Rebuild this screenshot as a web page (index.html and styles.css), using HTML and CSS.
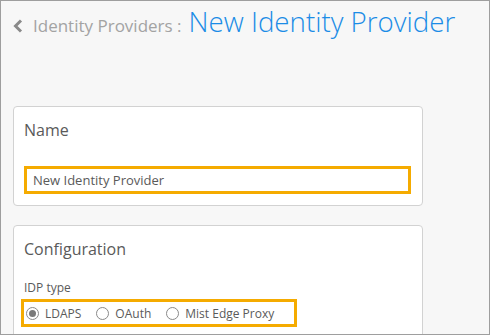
FILE: index.html
```html
<!DOCTYPE html>
<html>
<head>
<meta charset="utf-8">
<link rel="stylesheet" href="styles.css">
</head>
<body>
<div class="frame">
  <div class="header">
    <svg class="back" width="10" height="14" viewBox="0 0 10 14"><polyline points="8,1.5 2.5,7 8,12.5" fill="none" stroke="#8a8a8a" stroke-width="3"/></svg>
    <span class="crumb">Identity Providers :</span>
    <span class="title">New Identity Provider</span>
  </div>
  <div class="card">
    <div class="card-title">Name</div>
    <div class="input name-input">New Identity Provider</div>
  </div>
  <div class="card card-config">
    <div class="card-title">Configuration</div>
    <div class="field-label">IDP type</div>
    <div class="radio-group">
      <label class="radio"><span class="dot checked"></span>LDAPS</label>
      <label class="radio"><span class="dot"></span>OAuth</label>
      <label class="radio"><span class="dot"></span>Mist Edge Proxy</label>
    </div>
  </div>
</div>
</body>
</html>
```
FILE: styles.css
```css
html, body {
  margin: 0;
  padding: 0;
}
body {
  font-family: "Open Sans", "Liberation Sans", sans-serif;
  color: #555;
}
.frame {
  width: 490px;
  height: 335px;
  box-sizing: border-box;
  border: 1px solid #9e9e9e;
  background: #f7f7f7;
  overflow: hidden;
  padding-left: 12px;
}
.header {
  height: 105px;
  box-sizing: border-box;
  padding-top: 2px;
  display: flex;
  align-items: baseline;
  white-space: nowrap;
}
.back {
  align-self: flex-start;
  margin-top: 16px;
  margin-right: 10px;
}
.crumb {
  font-size: 17px;
  color: #a3a3a3;
  font-weight: 400;
  margin-right: 7px;
}
.title {
  font-size: 27.7px;
  line-height: 36px;
  font-weight: 300;
  color: #1b8ce6;
}
.card {
  width: 410px;
  box-sizing: border-box;
  background: #fff;
  border: 1px solid #d2d2d2;
  border-radius: 4px;
  padding: 12px 11px 11px 10px;
}
.card-config {
  margin-top: 19px;
  height: 200px;
}
.card-title {
  font-size: 16px;
  line-height: 22px;
  color: #5a5a5a;
}
.input {
  margin-top: 25px;
  height: 28px;
  box-sizing: border-box;
  border: 3px solid #f5ab00;
  padding-left: 6px;
  font-size: 13px;
  line-height: 22px;
  color: #5a5a5a;
}
.field-label {
  margin-top: 20px;
  font-size: 12px;
  line-height: 16px;
  color: #5a5a5a;
}
.radio-group {
  margin-top: 3px;
  margin-left: -3px;
  width: 276px;
  height: 28px;
  box-sizing: border-box;
  border: 3px solid #f5ab00;
  padding-left: 2px;
  display: flex;
  align-items: center;
  font-size: 12px;
  color: #5a5a5a;
  white-space: nowrap;
}
.radio {
  display: flex;
  align-items: center;
  flex-shrink: 0;
  margin-right: 15px;
}
.radio:last-child {
  margin-right: 0;
}
.dot {
  width: 13px;
  height: 13px;
  flex-shrink: 0;
  box-sizing: border-box;
  border: 1px solid #8a8a8a;
  border-radius: 50%;
  background: #fff;
  margin-right: 6px;
  position: relative;
}
.dot.checked::after {
  content: "";
  position: absolute;
  left: 2px;
  top: 2px;
  width: 7px;
  height: 7px;
  border-radius: 50%;
  background: #7a7a7a;
}
```
